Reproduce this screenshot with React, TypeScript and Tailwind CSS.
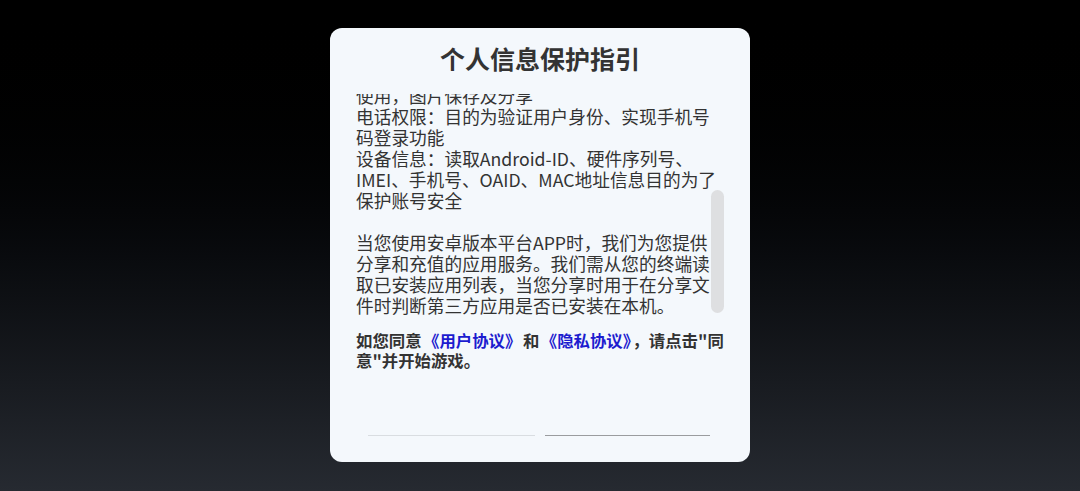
const scrollLines = [
  "使用，图片保存及分享",
  "电话权限：目的为验证用户身份、实现手机号",
  "码登录功能",
  "设备信息：读取Android-ID、硬件序列号、",
  "IMEI、手机号、OAID、MAC地址信息目的为了",
  "保护账号安全",
  "",
  "当您使用安卓版本平台APP时，我们为您提供",
  "分享和充值的应用服务。我们需从您的终端读",
  "取已安装应用列表，当您分享时用于在分享文",
  "件时判断第三方应用是否已安装在本机。",
];

export default function App() {
  return (
    <div
      className="w-[1080px] h-[491px] bg-linear-to-b from-[#000000] to-[#262a31] flex justify-center pt-[28px]"
      style={{ fontFamily: '"Noto Sans CJK SC", "Noto Sans", sans-serif' }}
    >
      <div className="w-[420px] h-[434px] rounded-[12px] bg-[#f4f8fc] flex flex-col">
        <div className="h-[66px] pb-[6px] flex items-center justify-center text-[25px] leading-[30px] font-bold text-[#333333]">
          个人信息保护指引
        </div>

        <div className="h-[222px] overflow-hidden flex pl-[26px] pr-[26px]">
          <div className="flex-1 min-w-0 -mt-[9.5px] text-[17.7px] leading-[21px] text-[#333333]">
            {scrollLines.map((line, i) => (
              <div key={i} className="h-[21px] whitespace-nowrap">
                {line}
              </div>
            ))}
          </div>
          <div className="shrink-0 w-[13px] h-[123px] mt-[96px] rounded-full bg-[#dedfe1]" />
        </div>

        <p className="mt-[14px] px-[26px] text-[16.4px] leading-[20px] font-bold text-[#333333]">
          如您同意<span className="px-[1.5px] text-[#1c1ccf]">《用户协议》</span>和<span className="px-[1.5px] text-[#1c1ccf]">《隐私协议》</span>，请点击"同意"并开始游戏。
        </p>

        <div className="mt-[65px] flex gap-[10px] pl-[38px]">
          <div className="w-[167px] border-t border-[#d9dde1]" />
          <div className="w-[165px] border-t border-[#9a9c9f]" />
        </div>
      </div>
    </div>
  );
}
